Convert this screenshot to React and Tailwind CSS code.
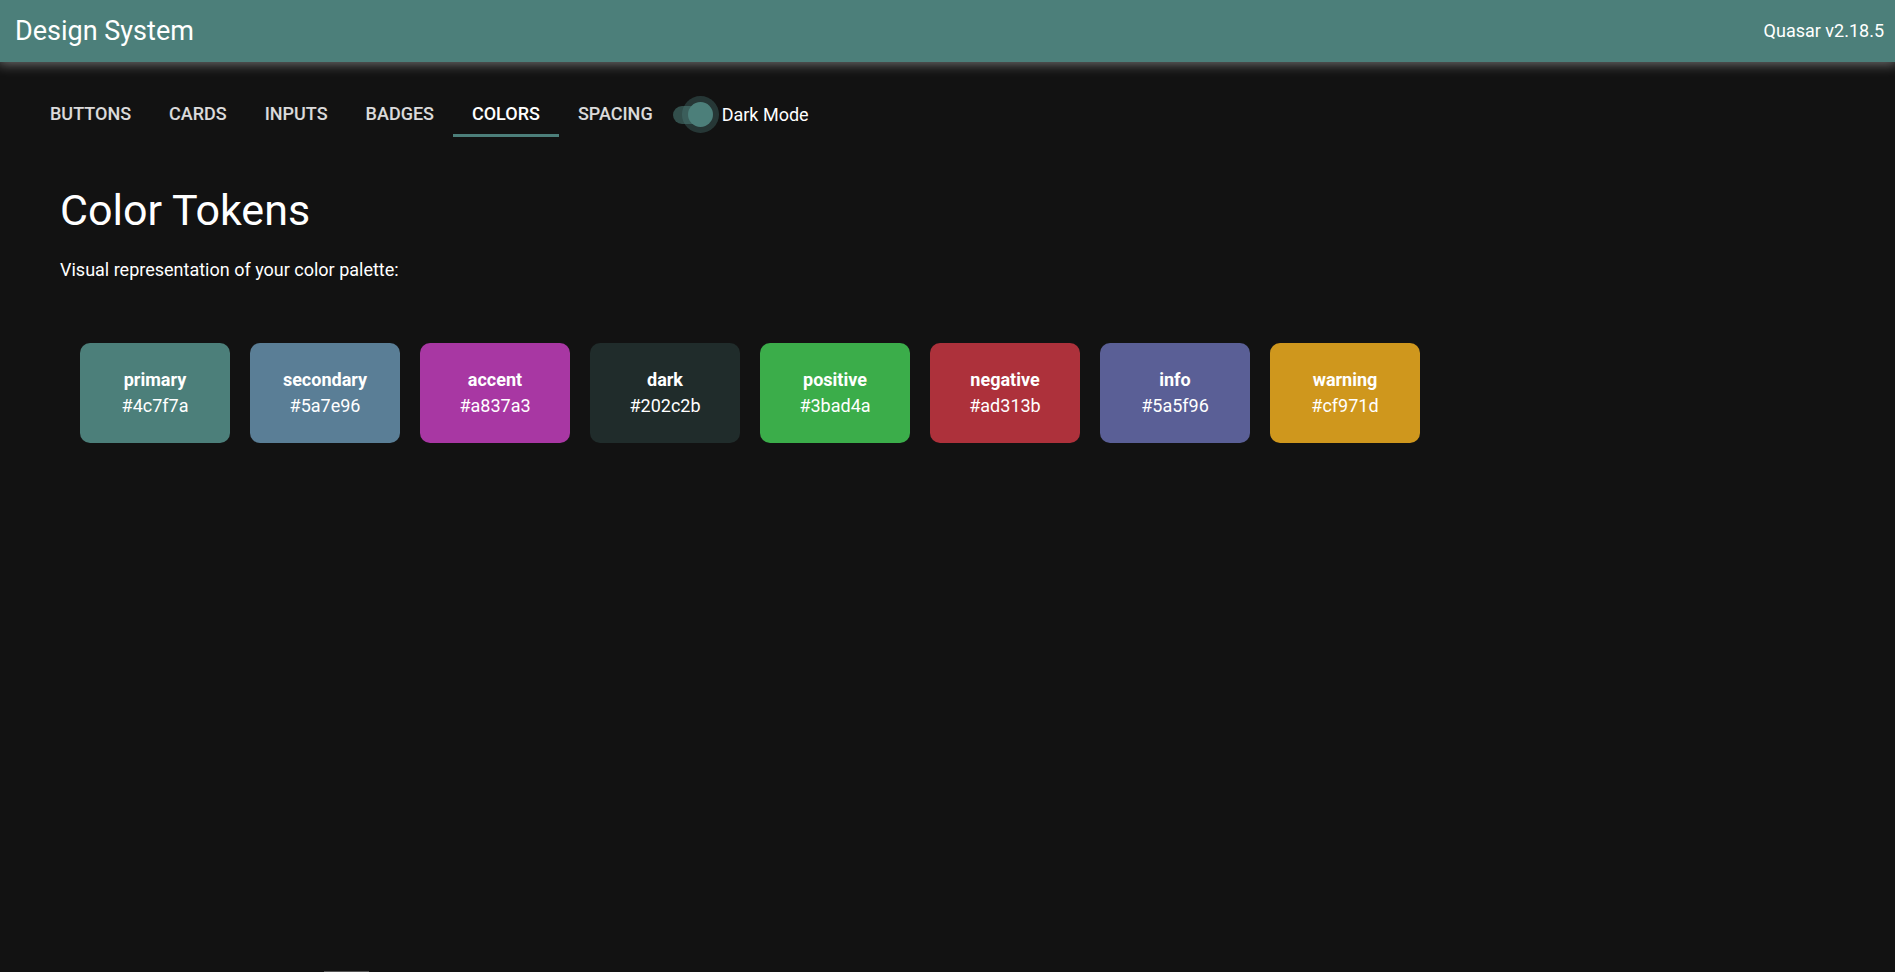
import { useState } from 'react';

const tabs = ['Buttons', 'Cards', 'Inputs', 'Badges', 'Colors', 'Spacing'];

const tokens = [
  { name: 'primary', hex: '#4c7f7a', bg: 'bg-[#4c7f7a]' },
  { name: 'secondary', hex: '#5a7e96', bg: 'bg-[#5a7e96]' },
  { name: 'accent', hex: '#a837a3', bg: 'bg-[#a837a3]' },
  { name: 'dark', hex: '#202c2b', bg: 'bg-[#202c2b]' },
  { name: 'positive', hex: '#3bad4a', bg: 'bg-[#3bad4a]' },
  { name: 'negative', hex: '#ad313b', bg: 'bg-[#ad313b]' },
  { name: 'info', hex: '#5a5f96', bg: 'bg-[#5a5f96]' },
  { name: 'warning', hex: '#cf971d', bg: 'bg-[#cf971d]' },
];

function Header() {
  return (
    <header className="flex h-[62px] items-center justify-between bg-[#4c7f7a] pr-[11px] pl-[15px] shadow-[0_0_12px_2px_rgba(255,255,255,0.4)]">
      <div className="text-[27px]">Design System</div>
      <div>Quasar v2.18.5</div>
    </header>
  );
}

function DarkToggle() {
  const [on, setOn] = useState(true);
  return (
    <label className="flex cursor-pointer items-center">
      <span className="relative flex h-[38px] w-[49px] items-center">
        <input
          type="checkbox"
          role="switch"
          checked={on}
          onChange={() => setOn(!on)}
          className="absolute inset-0 z-10 cursor-pointer opacity-0"
        />
        <span
          className={
            on
              ? 'h-[18px] w-[34px] rounded-full bg-[#4c7f7a] opacity-55'
              : 'h-[18px] w-[34px] rounded-full bg-white opacity-30'
          }
        />
        <span
          className={
            on
              ? 'absolute right-[3px] flex size-[37px] items-center justify-center rounded-full bg-[#4c7f7a]/35'
              : 'absolute right-[18px] flex size-[37px] items-center justify-center rounded-full'
          }
        >
          <span
            className={
              on
                ? 'size-[25px] rounded-full bg-[#4c7f7a]'
                : 'size-[25px] rounded-full bg-white'
            }
          />
        </span>
      </span>
      <span>Dark Mode</span>
    </label>
  );
}

export default function App() {
  const [active, setActive] = useState('Colors');
  return (
    <div className="flex min-h-screen flex-col bg-[#121212] font-[Roboto,sans-serif] text-[18px] leading-[26px] text-white">
      <Header />
      <main className="grow px-[30px] pt-[30px]">
        <div className="flex items-center">
          <div className="flex px-px" role="tablist">
            {tabs.map((tab) => (
              <button
                key={tab}
                type="button"
                role="tab"
                aria-selected={tab === active}
                onClick={() => setActive(tab)}
                className={
                  tab === active
                    ? 'h-[45px] border-b-3 border-[#4c7f7a] px-[19px] pt-0.5 font-medium uppercase'
                    : 'h-[45px] border-b-3 border-transparent px-[19px] pt-0.5 font-medium text-white/85 uppercase'
                }
              >
                {tab}
              </button>
            ))}
          </div>
          <DarkToggle />
        </div>
        <section className="px-[30px] pt-12">
          <h1 className="text-[43px] leading-[50px]">Color Tokens</h1>
          <p className="mt-[22px]">Visual representation of your color palette:</p>
          <ul className="mt-[60px] flex flex-wrap gap-5 px-5">
            {tokens.map((t) => (
              <li
                key={t.name}
                className={`flex h-[100px] w-[150px] flex-col items-center justify-center rounded-[10px] ${t.bg}`}
              >
                <strong className="font-bold">{t.name}</strong>
                <span>{t.hex}</span>
              </li>
            ))}
          </ul>
        </section>
      </main>
      <div className="ml-[324px] h-px w-[45px] bg-[#555555]" />
    </div>
  );
}
